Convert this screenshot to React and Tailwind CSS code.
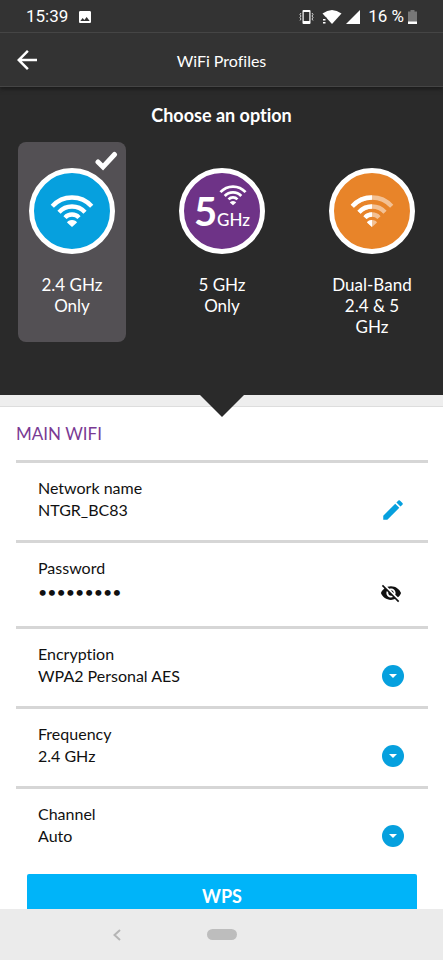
import React, { useState } from "react";
import { MdArrowBack, MdEdit, MdImage, MdVisibilityOff } from "react-icons/md";

const wifiArcs = (
  <>
    <g fill="none" stroke="currentColor" strokeWidth="4.3">
      <path d="M-19.7 -17.7A26.5 26.5 0 0 1 19.7 -17.7" />
      <path d="M-13 -11.7A17.5 17.5 0 0 1 13 -11.7" />
      <path d="M-7 -6.4A9.5 9.5 0 0 1 7 -6.4" />
    </g>
    <path fill="currentColor" d="M-5 -1.5Q-4 -3.8 0 -4Q4 -3.8 5 -1.5L0 3Z" />
  </>
);

function WifiIcon({ className, faded }) {
  return (
    <svg viewBox="-22 -29 44 33" className={className} aria-hidden="true">
      {faded ? (
        <>
          <clipPath id="leftHalf">
            <rect x="-22" y="-29" width="22" height="33" />
          </clipPath>
          <g opacity="0.5">{wifiArcs}</g>
          <g clipPath="url(#leftHalf)">{wifiArcs}</g>
        </>
      ) : (
        wifiArcs
      )}
    </svg>
  );
}

function StatusBar() {
  return (
    <div className="flex h-[33px] items-center justify-between border-b border-[#454545] px-[26px] pt-[2px] font-[Roboto,sans-serif] text-[17px]">
      <div className="flex items-center gap-[9px]">
        <span>15:39</span>
        <MdImage className="size-4" />
      </div>
      <div className="flex items-center gap-2">
        <svg viewBox="0 0 15 14" className="h-[14px] w-[15px]" aria-hidden="true">
          <path
            fill="currentColor"
            fillRule="evenodd"
            d="M4.5 0h6q1 0 1 1v12q0 1 -1 1h-6q-1 0 -1 -1V1q0 -1 1 -1zM4.7 2v9h5.6V2z"
          />
          <path
            fill="none"
            stroke="currentColor"
            strokeWidth="0.8"
            d="M2 3L1 4.500L2 6L1 7.500L2 9L1 10.500M13 3L14 4.500L13 6L14 7.500L13 9L14 10.500"
          />
        </svg>
        <div className="flex items-center gap-1">
          <svg viewBox="0 0 20 14" className="h-[14px] w-5" aria-hidden="true">
            <path fill="currentColor" d="M0.5 3.6Q10 -3.6 19.5 3.6L10 14Z" />
            <path stroke="#333" strokeWidth="5" d="M0 10H2V14" fill="none" />
            <path fill="currentColor" d="M1 9h2.5v1.5H1zM1 12h2.5v1.5H1z" />
          </svg>
          <svg viewBox="0 0 14 14" className="size-[14px]" aria-hidden="true">
            <path fill="currentColor" d="M14 0V14H0Z" />
          </svg>
        </div>
        <div className="flex items-center gap-1">
          <span>16 %</span>
          <svg viewBox="0 0 9 14" className="h-[14px] w-[9px]" aria-hidden="true">
            <path fill="#777" d="M2.5 0h4v1.5H9V12H0V1.5h2.5z" />
            <path fill="currentColor" d="M0 11.5h9V14H0z" />
          </svg>
        </div>
      </div>
    </div>
  );
}

const options = [
  {
    id: "2.4",
    label: "2.4 GHz Only",
    circle: "bg-[#06a0de]",
    icon: <WifiIcon className="h-[33px] w-11" />,
  },
  {
    id: "5",
    label: "5 GHz Only",
    circle: "bg-[#6e3387]",
    icon: (
      <svg viewBox="0 0 76 76" className="size-full" aria-hidden="true">
        <text x="10" y="53" fill="currentColor" fontSize="40" fontWeight="700">
          5
        </text>
        <text x="33" y="53" fill="currentColor" fontSize="17" fontWeight="500">
          GHz
        </text>
        <svg x="35" y="12" width="28" height="21" viewBox="-22 -29 44 33">
          {wifiArcs}
        </svg>
      </svg>
    ),
  },
  {
    id: "dual",
    label: "Dual-Band 2.4 & 5 GHz",
    circle: "bg-[#e88429]",
    icon: <WifiIcon className="h-[33px] w-11" faded />,
  },
];

function Option({ option, checked, onSelect }) {
  return (
    <label
      className={`relative flex w-[108px] cursor-pointer flex-col items-center rounded-lg px-3 pb-[5px] pt-[26px] ${
        checked ? "bg-[#535054]" : ""
      }`}
    >
      <input
        type="radio"
        name="band"
        value={option.id}
        checked={checked}
        onChange={() => onSelect(option.id)}
        className="sr-only"
      />
      {checked && (
        <svg viewBox="0 0 24 22" className="absolute right-2 top-2 h-[22px] w-6" aria-hidden="true">
          <path
            d="M4 12L9 17L20.5 4.5"
            fill="none"
            stroke="currentColor"
            strokeWidth="5"
            strokeLinecap="round"
          />
        </svg>
      )}
      <div
        className={`flex size-[86px] items-center justify-center rounded-full border-[5px] border-white ${option.circle}`}
      >
        {option.icon}
      </div>
      <span className="mt-5 text-center text-[17px] leading-[21px]">{option.label}</span>
    </label>
  );
}

function Row({ id, label, icon, children }) {
  return (
    <div className="flex items-end border-t-[3px] border-[#d6d6d6] px-[22px] pb-[19px] pt-[14px]">
      <div className="flex min-w-0 flex-1 flex-col">
        <label htmlFor={id} className="leading-[22px]">
          {label}
        </label>
        {children}
      </div>
      {icon}
    </div>
  );
}

function SelectRow({ id, label, choices }) {
  return (
    <Row
      id={id}
      label={label}
      icon={
        <svg viewBox="0 0 22 22" className="mr-[2px] size-[22px]" aria-hidden="true">
          <circle cx="11" cy="11" r="11" fill="#06a0de" />
          <path d="M7 9H15L11 13Z" fill="#fff" />
        </svg>
      }
    >
      <select id={id} className="h-[22px] appearance-none bg-transparent leading-[22px] outline-none">
        {choices.map((choice) => (
          <option key={choice}>{choice}</option>
        ))}
      </select>
    </Row>
  );
}

function App() {
  const [band, setBand] = useState("2.4");
  const [showPassword, setShowPassword] = useState(false);

  return (
    <div className="flex h-screen flex-col overflow-hidden bg-white font-[Lato,sans-serif] text-[16px] text-[#111] [font-variant-ligatures:none]">
      {/* Header */}
      <header className="relative z-10 border-b border-[#454545] bg-[#333] text-white shadow-[0_2px_4px_#1a1a1a]">
        <StatusBar />
        <div className="grid h-[53px] grid-cols-[42px_1fr_42px] items-center">
          <button type="button" aria-label="Back" className="pl-3">
            <MdArrowBack className="size-[30px]" />
          </button>
          <h1 className="pt-[2px] text-center">WiFi Profiles</h1>
        </div>
      </header>

      {/* Band options */}
      <section className="relative bg-[#2a2a2a] pb-[53px] pt-[17px] text-white">
        <h2 className="text-center text-[18px] font-bold leading-[22px]">Choose an option</h2>
        <div className="mt-4 flex justify-between pl-[18px] pr-[17px]">
          {options.map((option) => (
            <Option
              key={option.id}
              option={option}
              checked={band === option.id}
              onSelect={setBand}
            />
          ))}
        </div>
        <svg
          viewBox="0 0 44 22"
          className="absolute left-1/2 top-full h-[22px] w-11 -translate-x-1/2"
          aria-hidden="true"
        >
          <path d="M0 0H44L22 22Z" fill="#2a2a2a" />
        </svg>
      </section>
      <div className="h-3 shrink-0 border-b border-[#ddd] bg-[#eee]" />

      {/* Network settings */}
      <main className="min-h-0 flex-1 overflow-hidden pl-4 pr-[15px]">
        <h3 className="pb-[15px] pt-4 text-[17px] leading-[22px] text-[#7a3a93]">MAIN WIFI</h3>
        <Row
          id="name"
          label="Network name"
          icon={
            <button type="button" aria-label="Edit network name" className="-my-[2px]">
              <MdEdit className="size-[26px] text-[#06a0de]" />
            </button>
          }
        >
          <input
            id="name"
            defaultValue="NTGR_BC83"
            readOnly
            className="h-[22px] w-full leading-[22px] outline-none"
          />
        </Row>
        <Row
          id="password"
          label="Password"
          icon={
            <button
              type="button"
              aria-label="Show password"
              onClick={() => setShowPassword(!showPassword)}
              className="flex h-7 w-[26px] items-center"
            >
              <MdVisibilityOff className="size-[22px]" />
            </button>
          }
        >
          <input
            id="password"
            type={showPassword ? "text" : "password"}
            defaultValue="netgear24"
            readOnly
            className="h-7 w-full pb-1 outline-none"
          />
        </Row>
        <SelectRow
          id="encryption"
          label="Encryption"
          choices={["WPA2 Personal AES", "WPA Personal TKIP", "None"]}
        />
        <SelectRow id="frequency" label="Frequency" choices={["2.4 GHz", "5 GHz"]} />
        <SelectRow id="channel" label="Channel" choices={["Auto", "1", "6", "11"]} />
        <div className="px-[11px] pt-2">
          <button
            type="button"
            className="h-11 w-full rounded-[2px] bg-[#00b4f9] text-[18px] font-bold text-white"
          >
            WPS
          </button>
        </div>
      </main>

      {/* System navigation */}
      <nav className="grid h-[51px] shrink-0 grid-cols-[1fr_30px_1fr] items-center bg-[#ebebeb]">
        <button type="button" aria-label="Back" className="flex justify-center pl-7">
          <svg viewBox="0 0 8 12" className="h-3 w-2" fill="none" stroke="#b5b5b5" strokeWidth="2">
            <path d="M7 1L1.5 6L7 11" />
          </svg>
        </button>
        <button type="button" aria-label="Home" className="h-[11px] rounded-full bg-[#bdbdbd]" />
      </nav>
    </div>
  );
}

export default App;
